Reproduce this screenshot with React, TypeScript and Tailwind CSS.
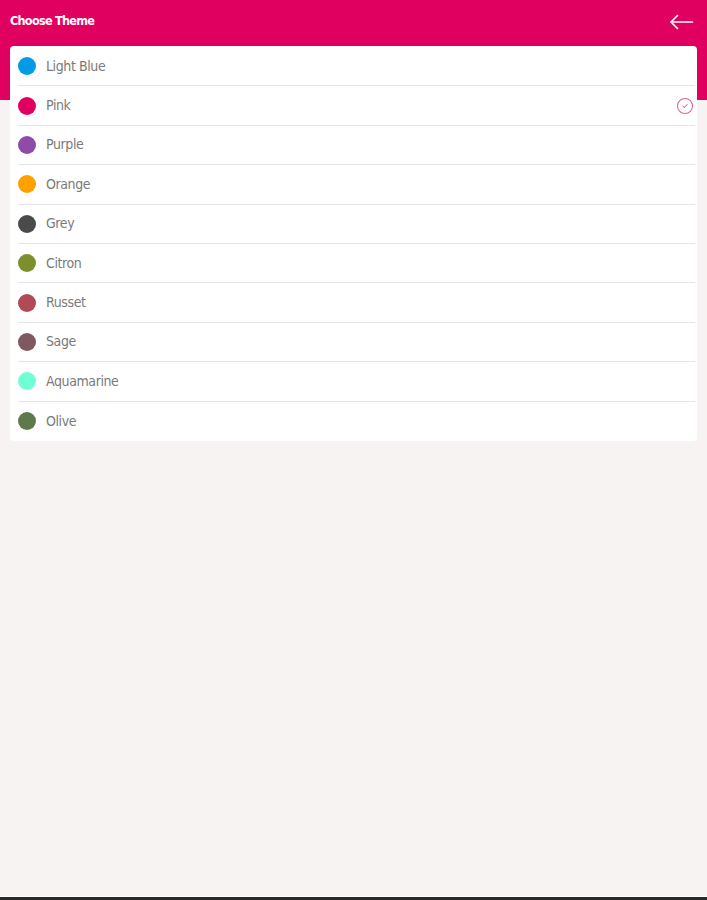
import { CircleCheck } from 'lucide-react';

const themes = [
  { name: 'Light Blue', color: '#039be5' },
  { name: 'Pink', color: '#e0005f', selected: true },
  { name: 'Purple', color: '#8e4ca8' },
  { name: 'Orange', color: '#ff9f00' },
  { name: 'Grey', color: '#4a4a4a' },
  { name: 'Citron', color: '#7d8f2c' },
  { name: 'Russet', color: '#b04a56' },
  { name: 'Sage', color: '#7e5962' },
  { name: 'Aquamarine', color: '#6fffd5' },
  { name: 'Olive', color: '#5d7a4c' },
];

export default function App() {
  return (
    <div
      className="h-[900px] flex flex-col bg-[#f7f3f2]"
      style={{ fontFamily: '"DejaVu Sans Condensed", "Liberation Sans", sans-serif' }}
    >
      <div className="flex-1">
        <header className="h-[100px] bg-[#e0005f] flex items-start justify-between pl-[10px] pr-[13px] pt-[10px]">
          <h1 className="text-white text-[12.5px] font-bold leading-[22px] tracking-[-0.7px]">Choose Theme</h1>
          <svg width="25" height="16" viewBox="0 0 25 16" className="mt-[4px]" fill="none" stroke="white" strokeWidth="1.6" strokeLinecap="round" strokeLinejoin="round">
            <path d="M2 8H23.5" />
            <path d="M8.5 1.5L2 8L8.5 14.5" />
          </svg>
        </header>
        <div className="-mt-[54px] mx-[10px] bg-white rounded-[4px] pt-[1px]">
          {themes.map((t, i) => (
            <div
              key={t.name}
              className={
                'ml-[8px] mr-[2px] h-[39.4px] flex items-center ' +
                (i < themes.length - 1 ? 'border-b border-[#e6e4e4]' : '')
              }
            >
              <span className="w-[18px] h-[18px] rounded-full shrink-0" style={{ backgroundColor: t.color }} />
              <span className="ml-[10px] text-[14px] tracking-[-0.4px] text-[#7a7a7a] flex-1">{t.name}</span>
              {t.selected && <CircleCheck size={18} strokeWidth={1.4} className="text-[#e0608f] mr-[1px]" />}
            </div>
          ))}
        </div>
      </div>
      <div className="h-[1px] bg-white" />
      <div className="h-[3px] bg-[#2a2a2a]" />
    </div>
  );
}
